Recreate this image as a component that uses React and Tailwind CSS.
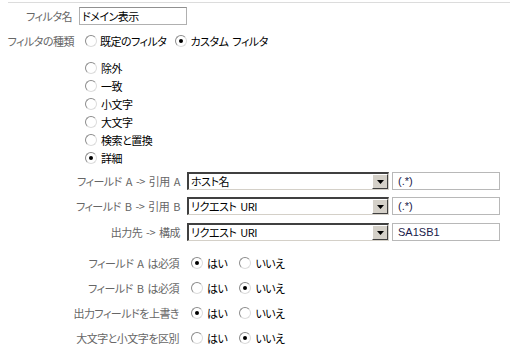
import React from "react";

const jp = "font-['Noto_Sans_CJK_JP','Noto_Sans',sans-serif] [font-feature-settings:'palt'] text-[11px] leading-none tracking-[-0.5px] [word-spacing:2px]";

function Radio({ checked }) {
  return (
    <span className="relative flex items-center justify-center w-[12px] h-[12px] rounded-full border border-t-[#8c8c8c] border-l-[#8c8c8c] border-b-[#dcdcdc] border-r-[#dcdcdc] bg-white shrink-0">
      {checked && <span className="w-[4px] h-[4px] rounded-full bg-black" />}
    </span>
  );
}

function Select({ value }) {
  return (
    <div className="flex w-[202px] h-[18px] bg-white border border-t-[#404040] border-l-[#404040] border-b-[#d4d0c8] border-r-[#d4d0c8] border-t-2 border-l-2">
      <div className={`flex-1 flex items-center pl-[2px] text-black ${jp}`}>{value}</div>
      <div className="w-[16px] h-full bg-[#d4d0c8] border border-t-white border-l-white border-b-[#404040] border-r-[#404040] flex items-center justify-center">
        <svg width="7" height="4" viewBox="0 0 7 4"><path d="M0 0h7L3.5 4z" fill="#000" /></svg>
      </div>
    </div>
  );
}

function TextInput({ value }) {
  return (
    <div className="w-[108px] h-[18px] bg-white border border-[#b8b8b8] flex items-center pl-[5px] text-[11px] font-['Liberation_Sans',sans-serif] text-[#1a1a4a]">
      {value}
    </div>
  );
}

function FieldRow({ label, sel, val, mt }) {
  return (
    <div className={`flex items-center ${mt}`}>
      <div className={`w-[180px] text-right text-[#666] ${jp}`}>{label}</div>
      <div className="ml-[7px]"><Select value={sel} /></div>
      <div className="ml-[3px]"><TextInput value={val} /></div>
    </div>
  );
}

function YesNo({ label, yes, mt }) {
  return (
    <div className={`flex items-center h-[14px] ${mt}`}>
      <div className={`w-[179px] text-right text-[#666] ${jp}`}>{label}</div>
      <div className="ml-[12px] flex items-center">
        <Radio checked={yes} />
        <span className={`ml-[4px] text-black ${jp}`}>はい</span>
        <div className="ml-[12px] flex items-center"><Radio checked={!yes} /></div>
        <span className={`ml-[4px] text-black ${jp}`}>いいえ</span>
      </div>
    </div>
  );
}

export default function App() {
  const opts = ["除外", "一致", "小文字", "大文字", "検索と置換", "詳細"];
  return (
    <div className="w-[515px] h-[354px] bg-white overflow-hidden">
      <div className="ml-[8px] mr-[5px] pt-[2px]">
        <div className="border-t border-[#dcdcdc]" />
      </div>
      <div className="flex items-center mt-[4px]">
        <div className={`w-[72px] text-right text-[#666] ${jp}`}>フィルタ名</div>
        <div className={`ml-[7px] w-[108px] h-[18px] bg-white border border-[#b0b0b0] border-t-[#909090] flex items-center pl-[2px] text-black ${jp}`}>ドメイン表示</div>
      </div>
      <div className="flex items-center mt-[8px] h-[16px]">
        <div className={`w-[74px] text-right text-[#666] ${jp}`}>フィルタの種類</div>
        <div className="ml-[11px] flex items-center">
          <Radio />
          <span className={`ml-[3px] text-black ${jp}`}>既定のフィルタ</span>
          <div className="ml-[9px] flex items-center"><Radio checked /></div>
          <span className={`ml-[3px] text-black ${jp}`}>カスタム フィルタ</span>
        </div>
      </div>
      <div className="ml-[85px] mt-[13px] flex flex-col gap-[6px]">
        {opts.map((o, i) => (
          <div key={o} className="flex items-center h-[12px]">
            <Radio checked={i === 5} />
            <span className={`ml-[4px] text-black ${jp}`}>{o}</span>
          </div>
        ))}
      </div>
      <FieldRow label="フィールド A -> 引用 A" sel="ホスト名" val="(.*)" mt="mt-[8px]" />
      <FieldRow label="フィールド B -> 引用 B" sel="リクエスト URI" val="(.*)" mt="mt-[7px]" />
      <FieldRow label="出力先 -> 構成" sel="リクエスト URI" val="SA1SB1" mt="mt-[8px]" />
      <YesNo label="フィールド A は必須" yes mt="mt-[15px]" />
      <YesNo label="フィールド B は必須" yes={false} mt="mt-[11px]" />
      <YesNo label="出力フィールドを上書き" yes mt="mt-[11px]" />
      <YesNo label="大文字と小文字を区別" yes={false} mt="mt-[11px]" />
    </div>
  );
}
